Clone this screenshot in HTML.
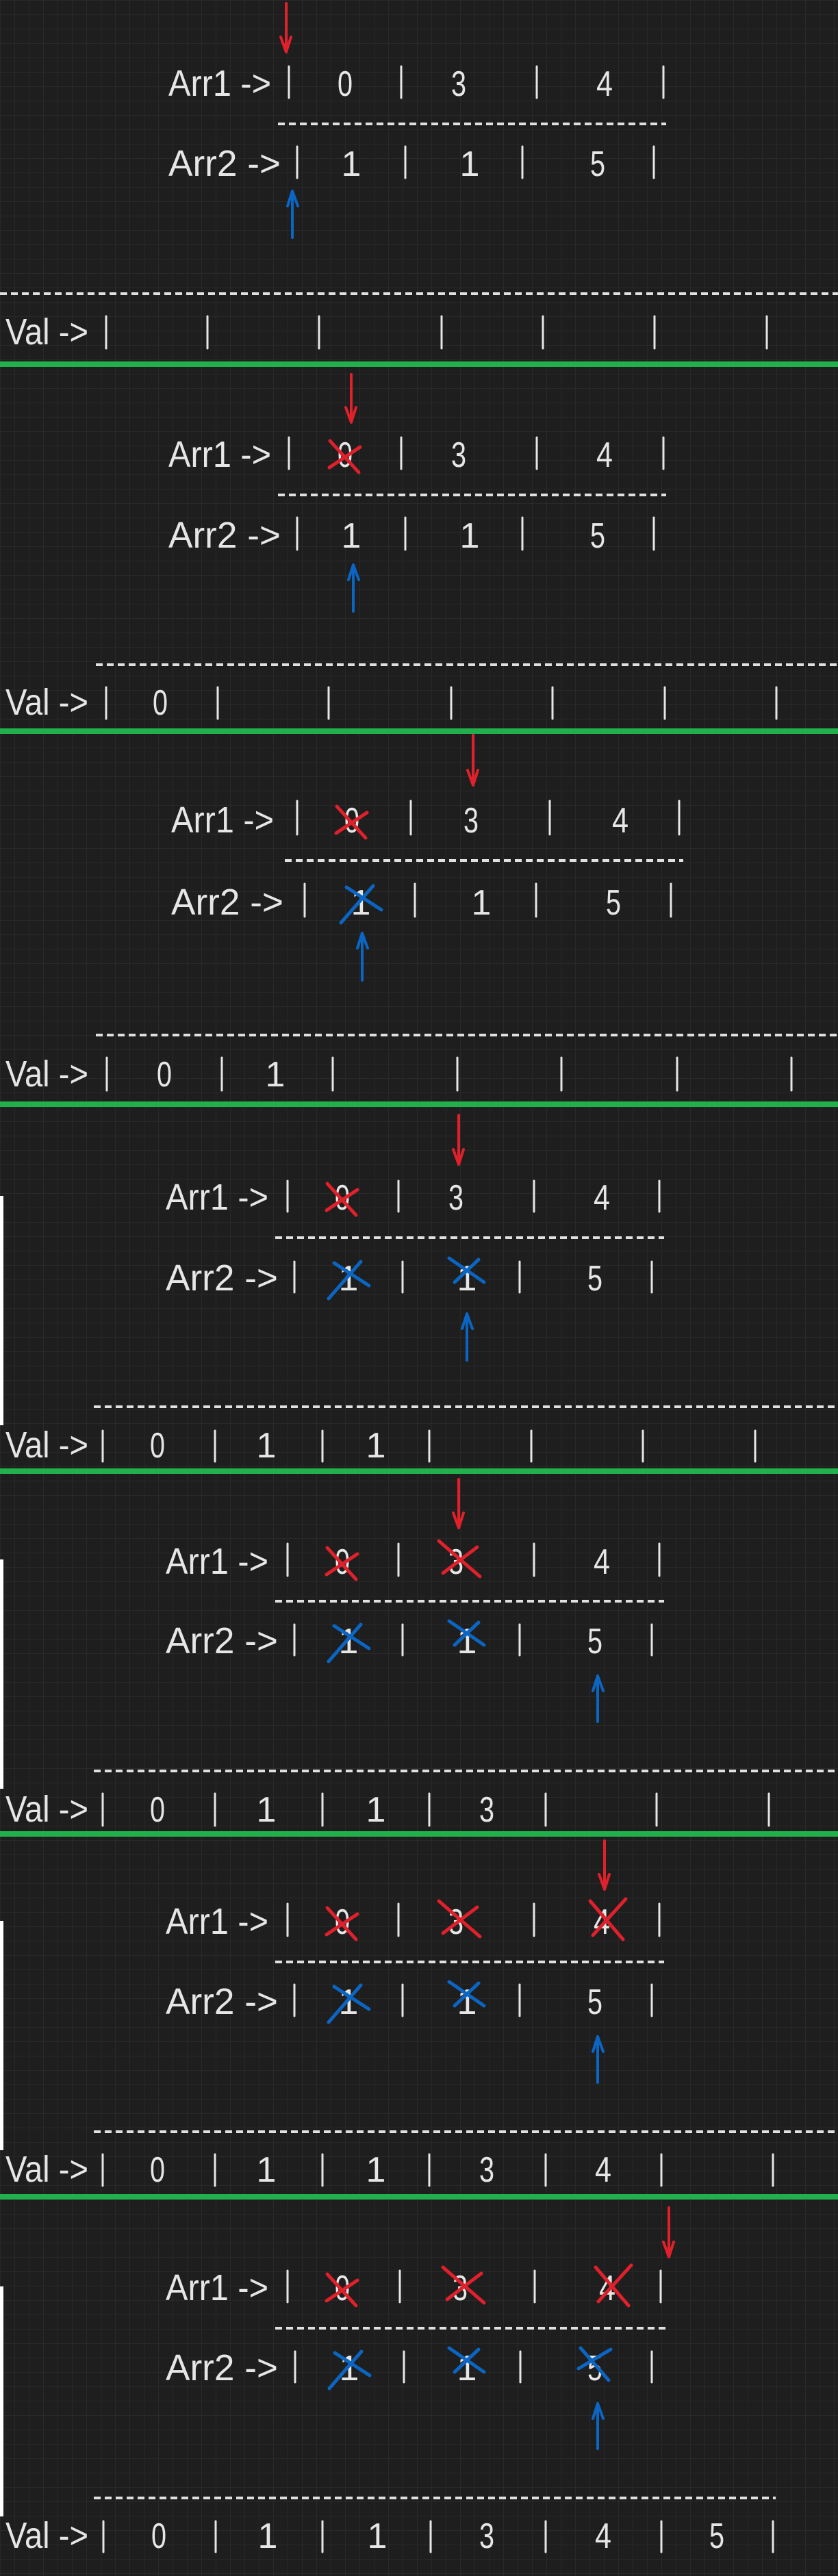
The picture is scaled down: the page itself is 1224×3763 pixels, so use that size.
<!DOCTYPE html>
<html><head><meta charset="utf-8"><style>
html,body{margin:0;padding:0;background:#1e1e1e;}
body{width:1224px;height:3763px;overflow:hidden;
background-color:#1e1e1e;
background-image:linear-gradient(#292929 1px,transparent 1px),linear-gradient(90deg,#292929 1px,transparent 1px);
background-size:21px 21px;}
svg{position:absolute;left:0;top:0}
.w{stroke:#e6e6e6;stroke-width:3;stroke-linecap:round;fill:none}
.d{stroke:#e0e0e0;stroke-width:4;stroke-dasharray:10 6;fill:none}
.r{stroke:#e0202b;stroke-width:5;stroke-linecap:round;stroke-linejoin:round;fill:none}
.b{stroke:#0b66c3;stroke-width:5;stroke-linecap:round;stroke-linejoin:round;fill:none}
.r.a,.b.a{stroke-width:4}
.g{fill:#22b04c}
.wl{fill:#ffffff}
text{fill:#e6e6e6;font-family:"Liberation Sans Narrow","Liberation Sans",sans-serif;font-size:54px}
.n{text-anchor:middle;font-size:52px}
</style></head><body>
<svg width="1224" height="3763" viewBox="0 0 1224 3763" xmlns="http://www.w3.org/2000/svg">
<rect class="g" x="0" y="528" width="1224" height="8"/>
<rect class="g" x="0" y="1064" width="1224" height="8"/>
<rect class="g" x="0" y="1609" width="1224" height="8"/>
<rect class="g" x="0" y="2145" width="1224" height="8"/>
<rect class="g" x="0" y="2675" width="1224" height="8"/>
<rect class="g" x="0" y="3205" width="1224" height="8"/>
<rect class="wl" x="0" y="1747" width="5" height="335"/>
<rect class="wl" x="0" y="2278" width="5" height="335"/>
<rect class="wl" x="0" y="2806" width="5" height="335"/>
<rect class="wl" x="0" y="3340" width="5" height="336"/>

<!-- P1 -->
<path class="r a" d="M418 5 L418 76 M410 54 L418 76 L425 54"/>
<text x="246" y="140" textLength="150" lengthAdjust="spacingAndGlyphs">Arr1 -&gt;</text>
<path class="w" d="M422 97V143M586 97V143M784 97V143M969 97V143"/>
<text class="n" x="504" y="140" textLength="22" lengthAdjust="spacingAndGlyphs">0</text><text class="n" x="670" y="140" textLength="22" lengthAdjust="spacingAndGlyphs">3</text><text class="n" x="883" y="140" textLength="24" lengthAdjust="spacingAndGlyphs">4</text>
<line class="d" x1="406" y1="181" x2="973" y2="181"/>
<text x="246" y="257" textLength="164" lengthAdjust="spacingAndGlyphs">Arr2 -&gt;</text>
<path class="w" d="M434 214V260M592 214V260M763 214V260M955 214V260"/>
<text class="n" x="513" y="257">1</text><text class="n" x="686" y="257">1</text><text class="n" x="873" y="257" textLength="22" lengthAdjust="spacingAndGlyphs">5</text>
<path class="b a" d="M427 347 L427 279 M420 301 L427 279 L435 301"/>
<line class="d" x1="0" y1="429" x2="1224" y2="429"/>
<text x="8" y="503" textLength="121" lengthAdjust="spacingAndGlyphs">Val -&gt;</text>
<path class="w" d="M155 462V509M303 462V509M466 462V509M645 462V509M793 462V509M956 462V509M1120 462V509"/>

<!-- P2 -->
<path class="r a" d="M513 547 L513 617 M505 595 L513 617 L520 595"/>
<text x="246" y="682" textLength="150" lengthAdjust="spacingAndGlyphs">Arr1 -&gt;</text>
<path class="w" d="M422 639V685M586 639V685M784 639V685M969 639V685"/>
<text class="n" x="504" y="682" textLength="22" lengthAdjust="spacingAndGlyphs">0</text><text class="n" x="670" y="682" textLength="22" lengthAdjust="spacingAndGlyphs">3</text><text class="n" x="883" y="682" textLength="24" lengthAdjust="spacingAndGlyphs">4</text>
<path class="r" d="M482 644 L524 690 M481 683 L526 653"/>
<line class="d" x1="406" y1="723" x2="973" y2="723"/>
<text x="246" y="800" textLength="164" lengthAdjust="spacingAndGlyphs">Arr2 -&gt;</text>
<path class="w" d="M434 756V803M592 756V803M763 756V803M955 756V803"/>
<text class="n" x="513" y="800">1</text><text class="n" x="686" y="800">1</text><text class="n" x="873" y="800" textLength="22" lengthAdjust="spacingAndGlyphs">5</text>
<path class="b a" d="M516 893 L516 825 M509 847 L516 825 L524 847"/>
<line class="d" x1="140" y1="971" x2="1224" y2="971"/>
<text x="8" y="1044" textLength="121" lengthAdjust="spacingAndGlyphs">Val -&gt;</text>
<path class="w" d="M155 1004V1050M318 1004V1050M480 1004V1050M659 1004V1050M807 1004V1050M971 1004V1050M1134 1004V1050"/>
<text class="n" x="234" y="1044" textLength="22" lengthAdjust="spacingAndGlyphs">0</text>

<!-- P3 -->
<path class="r a" d="M691 1074 L691 1147 M683 1125 L691 1147 L698 1125"/>
<text x="250" y="1216" textLength="150" lengthAdjust="spacingAndGlyphs">Arr1 -&gt;</text>
<path class="w" d="M434 1170V1219M600 1170V1219M803 1170V1219M992 1170V1219"/>
<text class="n" x="514" y="1216" textLength="22" lengthAdjust="spacingAndGlyphs">0</text><text class="n" x="688" y="1216" textLength="22" lengthAdjust="spacingAndGlyphs">3</text><text class="n" x="906" y="1216" textLength="24" lengthAdjust="spacingAndGlyphs">4</text>
<path class="r" d="M492 1178 L534 1224 M491 1217 L536 1187"/>
<line class="d" x1="416" y1="1257" x2="998" y2="1257"/>
<text x="250" y="1336" textLength="164" lengthAdjust="spacingAndGlyphs">Arr2 -&gt;</text>
<path class="w" d="M445 1291V1339M606 1291V1339M783 1291V1339M980 1291V1339"/>
<text class="n" x="527" y="1336">1</text><text class="n" x="703" y="1336">1</text><text class="n" x="896" y="1336" textLength="22" lengthAdjust="spacingAndGlyphs">5</text>
<path class="b" d="M498 1348 L545 1294 M506 1296 L557 1329"/>
<path class="b a" d="M529 1432 L529 1363 M522 1385 L529 1363 L537 1385"/>
<line class="d" x1="140" y1="1512" x2="1224" y2="1512"/>
<text x="8" y="1587" textLength="121" lengthAdjust="spacingAndGlyphs">Val -&gt;</text>
<path class="w" d="M156 1545V1593M324 1545V1593M486 1545V1593M668 1545V1593M820 1545V1593M989 1545V1593M1156 1545V1593"/>
<text class="n" x="240" y="1587" textLength="22" lengthAdjust="spacingAndGlyphs">0</text><text class="n" x="402" y="1587">1</text>

<!-- P4 -->
<path class="r a" d="M670 1629 L670 1701 M662 1679 L670 1701 L677 1679"/>
<text x="242" y="1767" textLength="150" lengthAdjust="spacingAndGlyphs">Arr1 -&gt;</text>
<path class="w" d="M420 1725V1770M582 1725V1770M780 1725V1770M963 1725V1770"/>
<text class="n" x="500" y="1767" textLength="22" lengthAdjust="spacingAndGlyphs">0</text><text class="n" x="666" y="1767" textLength="22" lengthAdjust="spacingAndGlyphs">3</text><text class="n" x="879" y="1767" textLength="24" lengthAdjust="spacingAndGlyphs">4</text>
<path class="r" d="M478 1729 L520 1775 M477 1768 L522 1738"/>
<line class="d" x1="402" y1="1808" x2="970" y2="1808"/>
<text x="242" y="1885" textLength="164" lengthAdjust="spacingAndGlyphs">Arr2 -&gt;</text>
<path class="w" d="M430 1843V1888M588 1843V1888M759 1843V1888M952 1843V1888"/>
<text class="n" x="509" y="1885">1</text><text class="n" x="682" y="1885">1</text><text class="n" x="869" y="1885" textLength="22" lengthAdjust="spacingAndGlyphs">5</text>
<path class="b" d="M480 1897 L527 1843 M488 1845 L539 1878"/>
<path class="b" d="M656 1838 L707 1873 M664 1873 L699 1840"/>
<path class="b a" d="M682 1987 L682 1919 M675 1941 L682 1919 L690 1941"/>
<line class="d" x1="137" y1="2055" x2="1224" y2="2055"/>
<text x="8" y="2129" textLength="121" lengthAdjust="spacingAndGlyphs">Val -&gt;</text>
<path class="w" d="M150 2090V2135M314 2090V2135M471 2090V2135M627 2090V2135M776 2090V2135M939 2090V2135M1103 2090V2135"/>
<text class="n" x="230" y="2129" textLength="22" lengthAdjust="spacingAndGlyphs">0</text><text class="n" x="389" y="2129">1</text><text class="n" x="549" y="2129">1</text>

<!-- P5 -->
<path class="r a" d="M670 2161 L670 2232 M662 2210 L670 2232 L677 2210"/>
<text x="242" y="2299" textLength="150" lengthAdjust="spacingAndGlyphs">Arr1 -&gt;</text>
<path class="w" d="M420 2255V2302M582 2255V2302M780 2255V2302M963 2255V2302"/>
<text class="n" x="500" y="2299" textLength="22" lengthAdjust="spacingAndGlyphs">0</text><text class="n" x="666" y="2299" textLength="22" lengthAdjust="spacingAndGlyphs">3</text><text class="n" x="879" y="2299" textLength="24" lengthAdjust="spacingAndGlyphs">4</text>
<path class="r" d="M478 2261 L520 2307 M477 2300 L522 2270"/>
<path class="r" d="M641 2251 L701 2303 M647 2298 L697 2260"/>
<line class="d" x1="402" y1="2339" x2="970" y2="2339"/>
<text x="242" y="2415" textLength="164" lengthAdjust="spacingAndGlyphs">Arr2 -&gt;</text>
<path class="w" d="M430 2373V2418M588 2373V2418M759 2373V2418M952 2373V2418"/>
<text class="n" x="509" y="2415">1</text><text class="n" x="682" y="2415">1</text><text class="n" x="869" y="2415" textLength="22" lengthAdjust="spacingAndGlyphs">5</text>
<path class="b" d="M480 2427 L527 2373 M488 2375 L539 2408"/>
<path class="b" d="M656 2368 L707 2403 M664 2403 L699 2370"/>
<path class="b a" d="M873 2515 L873 2448 M866 2470 L873 2448 L881 2470"/>
<line class="d" x1="137" y1="2587" x2="1224" y2="2587"/>
<text x="8" y="2661" textLength="121" lengthAdjust="spacingAndGlyphs">Val -&gt;</text>
<path class="w" d="M150 2620V2667M314 2620V2667M471 2620V2667M627 2620V2667M797 2620V2667M959 2620V2667M1123 2620V2667"/>
<text class="n" x="230" y="2661" textLength="22" lengthAdjust="spacingAndGlyphs">0</text><text class="n" x="389" y="2661">1</text><text class="n" x="549" y="2661">1</text><text class="n" x="711" y="2661" textLength="22" lengthAdjust="spacingAndGlyphs">3</text>

<!-- P6 -->
<path class="r a" d="M883 2689 L883 2760 M875 2738 L883 2760 L890 2738"/>
<text x="242" y="2825" textLength="150" lengthAdjust="spacingAndGlyphs">Arr1 -&gt;</text>
<path class="w" d="M420 2781V2828M582 2781V2828M780 2781V2828M963 2781V2828"/>
<text class="n" x="500" y="2825" textLength="22" lengthAdjust="spacingAndGlyphs">0</text><text class="n" x="666" y="2825" textLength="22" lengthAdjust="spacingAndGlyphs">3</text><text class="n" x="879" y="2825" textLength="24" lengthAdjust="spacingAndGlyphs">4</text>
<path class="r" d="M478 2787 L520 2833 M477 2826 L522 2796"/>
<path class="r" d="M641 2777 L701 2829 M647 2824 L697 2786"/>
<path class="r" d="M862 2777 L910 2833 M866 2827 L914 2774"/>
<line class="d" x1="402" y1="2866" x2="970" y2="2866"/>
<text x="242" y="2942" textLength="164" lengthAdjust="spacingAndGlyphs">Arr2 -&gt;</text>
<path class="w" d="M430 2899V2945M588 2899V2945M759 2899V2945M952 2899V2945"/>
<text class="n" x="509" y="2942">1</text><text class="n" x="682" y="2942">1</text><text class="n" x="869" y="2942" textLength="22" lengthAdjust="spacingAndGlyphs">5</text>
<path class="b" d="M480 2954 L527 2900 M488 2902 L539 2935"/>
<path class="b" d="M656 2895 L707 2930 M664 2930 L699 2897"/>
<path class="b a" d="M873 3042 L873 2975 M866 2997 L873 2975 L881 2997"/>
<line class="d" x1="137" y1="3114" x2="1224" y2="3114"/>
<text x="8" y="3187" textLength="121" lengthAdjust="spacingAndGlyphs">Val -&gt;</text>
<path class="w" d="M150 3147V3193M314 3147V3193M471 3147V3193M627 3147V3193M797 3147V3193M966 3147V3193M1129 3147V3193"/>
<text class="n" x="230" y="3187" textLength="22" lengthAdjust="spacingAndGlyphs">0</text><text class="n" x="389" y="3187">1</text><text class="n" x="549" y="3187">1</text><text class="n" x="711" y="3187" textLength="22" lengthAdjust="spacingAndGlyphs">3</text><text class="n" x="881" y="3187" textLength="24" lengthAdjust="spacingAndGlyphs">4</text>

<!-- P7 -->
<path class="r a" d="M977 3225 L977 3297 M969 3275 L977 3297 L984 3275"/>
<text x="242" y="3360" textLength="150" lengthAdjust="spacingAndGlyphs">Arr1 -&gt;</text>
<path class="w" d="M420 3317V3363M584 3317V3363M781 3317V3363M965 3317V3363"/>
<text class="n" x="500" y="3360" textLength="22" lengthAdjust="spacingAndGlyphs">0</text><text class="n" x="672" y="3360" textLength="22" lengthAdjust="spacingAndGlyphs">3</text><text class="n" x="887" y="3360" textLength="24" lengthAdjust="spacingAndGlyphs">4</text>
<path class="r" d="M478 3322 L520 3368 M477 3361 L522 3331"/>
<path class="r" d="M647 3312 L707 3364 M653 3359 L703 3321"/>
<path class="r" d="M870 3312 L918 3368 M874 3362 L922 3309"/>
<line class="d" x1="402" y1="3401" x2="973" y2="3401"/>
<text x="242" y="3477" textLength="164" lengthAdjust="spacingAndGlyphs">Arr2 -&gt;</text>
<path class="w" d="M431 3435V3480M590 3435V3480M760 3435V3480M952 3435V3480"/>
<text class="n" x="510" y="3477">1</text><text class="n" x="682" y="3477">1</text><text class="n" x="869" y="3477" textLength="22" lengthAdjust="spacingAndGlyphs">5</text>
<path class="b" d="M481 3489 L528 3435 M489 3437 L540 3470"/>
<path class="b" d="M656 3430 L707 3465 M664 3465 L699 3432"/>
<path class="b" d="M848 3430 L889 3477 M845 3460 L892 3432"/>
<path class="b a" d="M873 3577 L873 3511 M866 3533 L873 3511 L881 3533"/>
<line class="d" x1="137" y1="3649" x2="1133" y2="3649"/>
<text x="8" y="3722" textLength="121" lengthAdjust="spacingAndGlyphs">Val -&gt;</text>
<path class="w" d="M151 3683V3728M315 3683V3728M471 3683V3728M629 3683V3728M797 3683V3728M966 3683V3728M1129 3683V3728"/>
<text class="n" x="232" y="3722" textLength="22" lengthAdjust="spacingAndGlyphs">0</text><text class="n" x="391" y="3722">1</text><text class="n" x="551" y="3722">1</text><text class="n" x="711" y="3722" textLength="22" lengthAdjust="spacingAndGlyphs">3</text><text class="n" x="881" y="3722" textLength="24" lengthAdjust="spacingAndGlyphs">4</text><text class="n" x="1047" y="3722" textLength="22" lengthAdjust="spacingAndGlyphs">5</text>
</svg>
</body></html>
